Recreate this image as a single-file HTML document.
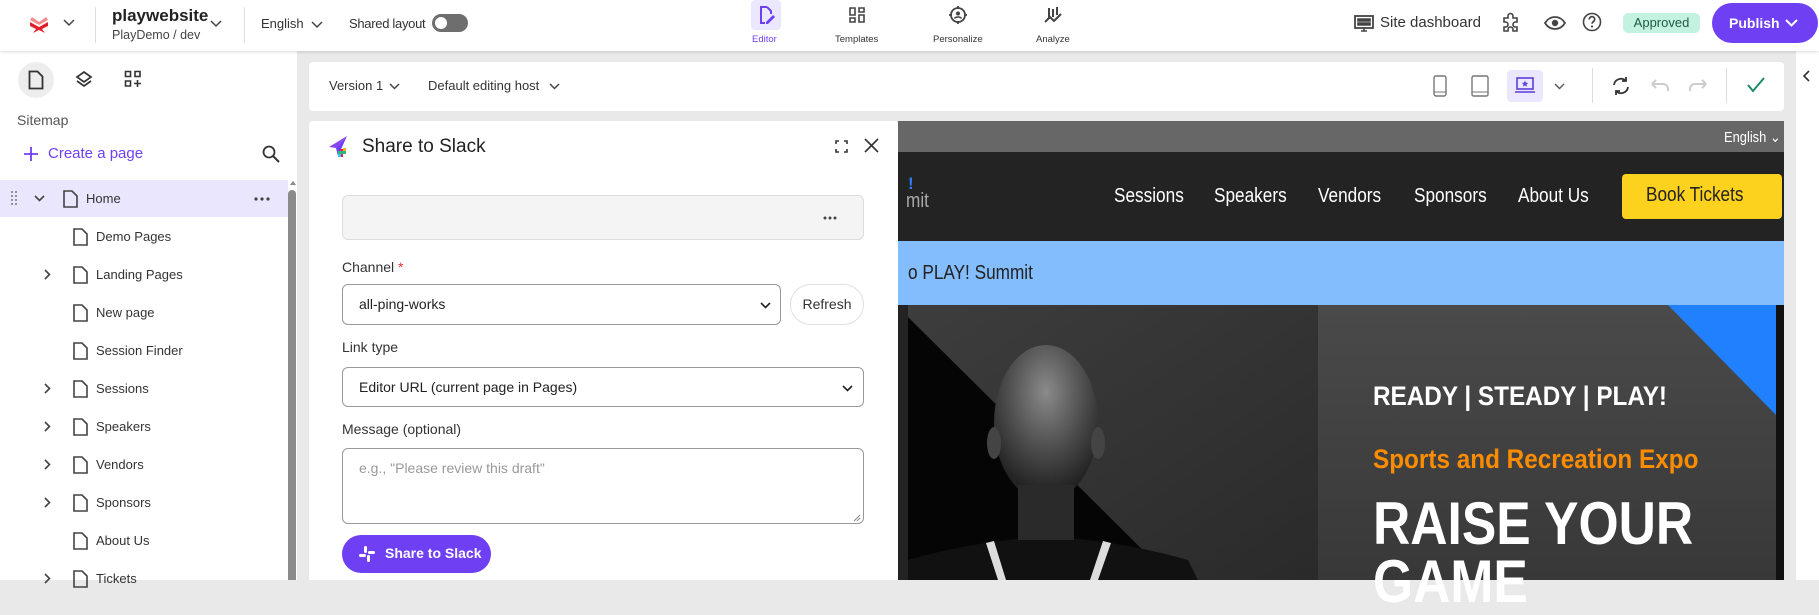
<!DOCTYPE html>
<html><head><meta charset="utf-8"><style>
*{box-sizing:border-box;margin:0;padding:0}
html{background:#e9e9e9}
body{width:1819px;height:580px;overflow:hidden;font-family:"Liberation Sans",sans-serif;background:#e9e9e9;position:relative;color:#222}
.a{position:absolute}
.top{left:0;top:0;width:1819px;height:51px;background:#fff;box-shadow:0 1px 3px rgba(0,0,0,.15);z-index:5}
.t{position:absolute;white-space:nowrap}
.left{left:0;top:51px;width:297px;height:529px;background:#fff}
.row{position:absolute;left:0;width:288px;height:38px;font-size:13px;color:#333}
.row span{position:absolute;top:11px}
.n{transform:scaleX(.86);transform-origin:0 0}
</style></head><body>

<div class="a top">
  <svg class="a" style="left:28px;top:13px" width="22" height="22" viewBox="0 0 22 22"><path d="M4 4 L11 9 L18 4 L20 7 L11 12 L2 7Z" fill="#f28b8b"/><path d="M2 9 L11 14 L20 9 L20 13 L14 16 L17 20 L11 17 L5 20 L8 16 L2 13Z" fill="#e2202a"/></svg>
  <svg class="a" style="left:63px;top:19px" width="12" height="8"><path d="M1 1l5 5 5-5" stroke="#444" stroke-width="1.5" fill="none"/></svg>
  <div class="a" style="left:95px;top:7px;width:1px;height:36px;background:#ddd"></div>
  <div class="t" style="left:112px;top:6px;font-size:17px;font-weight:bold;color:#222">playwebsite</div>
  <div class="t" style="left:112px;top:28px;font-size:12.5px;color:#444">PlayDemo / dev</div>
  <svg class="a" style="left:210px;top:20px" width="12" height="8"><path d="M1 1l5 5 5-5" stroke="#444" stroke-width="1.5" fill="none"/></svg>
  <div class="a" style="left:244px;top:7px;width:1px;height:36px;background:#ddd"></div>
  <div class="t" style="left:261px;top:16px;font-size:13px;color:#333">English</div>
  <svg class="a" style="left:311px;top:21px" width="12" height="8"><path d="M1 1l5 5 5-5" stroke="#444" stroke-width="1.5" fill="none"/></svg>
  <div class="t" style="left:349px;top:16px;font-size:13px;color:#333;letter-spacing:-.3px">Shared layout</div>
  <div class="a" style="left:432px;top:14px;width:36px;height:18px;border-radius:9px;background:#6e6e6e"></div>
  <div class="a" style="left:435px;top:17px;width:12px;height:12px;border-radius:6px;background:#fff"></div>

  <div class="a" style="left:751px;top:0;width:30px;height:30px;border-radius:4px;background:#ebe7fe"></div>
  <svg class="a" style="left:756px;top:5px" width="20" height="20" viewBox="0 0 20 20"><path d="M11 2H5v16h4M11 2l4 4v3" stroke="#6e3ff3" stroke-width="2" fill="none"/><path d="M10 17l7-7 2 2-7 7h-2z" fill="#6e3ff3"/></svg>
  <div class="t" style="left:752px;top:34px;font-size:9.5px;color:#6e3ff3">Editor</div>
  <svg class="a" style="left:848px;top:6px" width="18" height="18" viewBox="0 0 18 18"><path d="M2 2h5v7H2zM11 2h5v4h-5zM11 9h5v7h-5zM2 12h5v4H2z" stroke="#444" stroke-width="1.6" fill="none"/></svg>
  <div class="t" style="left:835px;top:34px;font-size:9.5px;color:#333">Templates</div>
  <svg class="a" style="left:948px;top:5px" width="20" height="20" viewBox="0 0 20 20"><circle cx="10" cy="10" r="7" stroke="#444" stroke-width="1.8" fill="none"/><path d="M10 1v3M10 16v3M1 10h3M16 10h3" stroke="#444" stroke-width="1.8"/><circle cx="10" cy="8.5" r="2" fill="#444"/><path d="M6.5 13.5c1-2 6-2 7 0" stroke="#444" stroke-width="1.6" fill="none"/></svg>
  <div class="t" style="left:933px;top:34px;font-size:9.5px;color:#333">Personalize</div>
  <svg class="a" style="left:1043px;top:5px" width="20" height="20" viewBox="0 0 20 20"><path d="M6 3v11M10 4v8M14 2v8M2 17l5-5 4 4 7-7" stroke="#444" stroke-width="2" fill="none"/></svg>
  <div class="t" style="left:1036px;top:34px;font-size:9.5px;color:#333">Analyze</div>

  <svg class="a" style="left:1354px;top:14px" width="20" height="20" viewBox="0 0 20 20"><rect x="1" y="2" width="18" height="12" stroke="#444" stroke-width="1.8" fill="none"/><path d="M4 5h6v2H4zM11 5h5v2h-5zM4 9h6v2H4zM11 9h5v2h-5zM7 17h6M10 14v3" stroke="#444" stroke-width="1.6" fill="#444"/></svg>
  <div class="t" style="left:1380px;top:14px;font-size:15px;color:#333">Site dashboard</div>
  <svg class="a" style="left:1500px;top:12px" width="22" height="22" viewBox="0 0 22 22"><path d="M8 4a2.5 2.5 0 015 0v2h4v4h-1.5a2.5 2.5 0 000 5H17v4h-4v-1.5a2.5 2.5 0 00-5 0V19H4v-4h1.5a2.5 2.5 0 000-5H4V6h4z" stroke="#444" stroke-width="1.6" fill="none"/></svg>
  <svg class="a" style="left:1544px;top:14px" width="22" height="18" viewBox="0 0 22 18"><path d="M1 9c5-8 15-8 20 0-5 8-15 8-20 0z" stroke="#444" stroke-width="1.8" fill="none"/><circle cx="11" cy="9" r="3.2" fill="#444"/></svg>
  <svg class="a" style="left:1582px;top:12px" width="20" height="20" viewBox="0 0 20 20"><circle cx="10" cy="10" r="8.5" stroke="#444" stroke-width="1.6" fill="none"/><path d="M7.3 7.5a2.7 2.7 0 115 1.2c-.8 1-2.3 1.4-2.3 3" stroke="#444" stroke-width="1.7" fill="none"/><circle cx="10" cy="14.5" r="1.1" fill="#444"/></svg>
  <div class="a" style="left:1623px;top:13px;width:77px;height:20px;border-radius:5px;background:#c3f2e0;font-size:13px;color:#1d5a44;text-align:center;line-height:20px">Approved</div>
  <div class="a" style="left:1712px;top:3px;width:106px;height:40px;border-radius:20px;background:#6e3ff3;color:#fff;font-weight:bold;font-size:14px;line-height:40px;padding-left:17px">Publish</div>
  <svg class="a" style="left:1785px;top:19px" width="13" height="8"><path d="M1 1l5.5 5.5L12 1" stroke="#fff" stroke-width="2" fill="none"/></svg>
</div>

<div class="a left">
  <div class="a" style="left:18px;top:11px;width:36px;height:36px;border-radius:18px;background:#ededed"></div>
  <svg class="a" style="left:28px;top:19px" width="16" height="20" viewBox="0 0 16 20"><path d="M1.5 1.5h8l5 5v12h-13z" stroke="#333" stroke-width="1.8" fill="none"/></svg>
  <svg class="a" style="left:74px;top:19px" width="20" height="20" viewBox="0 0 20 20"><path d="M10 2l7 5-7 5-7-5z" stroke="#333" stroke-width="1.7" fill="none"/><path d="M3 11l7 5 7-5" stroke="#333" stroke-width="1.7" fill="none"/></svg>
  <svg class="a" style="left:124px;top:19px" width="18" height="18" viewBox="0 0 18 18"><path d="M1.5 1.5h5v5h-5zM11 1.5h5v5h-5zM1.5 11h5v5h-5zM13.5 10v7M10 13.5h7" stroke="#333" stroke-width="1.6" fill="none"/></svg>
  <div class="t" style="left:17px;top:61px;font-size:14px;color:#555">Sitemap</div>
  <svg class="a" style="left:24px;top:96px" width="14" height="14"><path d="M7 0v14M0 7h14" stroke="#6e3ff3" stroke-width="1.8"/></svg>
  <div class="t" style="left:48px;top:94px;font-size:15px;color:#6e3ff3">Create a page</div>
  <svg class="a" style="left:262px;top:94px" width="18" height="18" viewBox="0 0 18 18"><circle cx="7" cy="7" r="5.5" stroke="#333" stroke-width="1.8" fill="none"/><path d="M11 11l6 6" stroke="#333" stroke-width="2"/></svg>

  <div class="row" style="top:129px;background:#e9e6fd;height:37px">
    <svg class="a" style="left:11px;top:11px" width="6" height="16"><g fill="#777"><circle cx="1" cy="1" r="1"/><circle cx="5" cy="1" r="1"/><circle cx="1" cy="5" r="1"/><circle cx="5" cy="5" r="1"/><circle cx="1" cy="9" r="1"/><circle cx="5" cy="9" r="1"/><circle cx="1" cy="13" r="1"/><circle cx="5" cy="13" r="1"/></g></svg>
    <svg class="a" style="left:34px;top:15px" width="11" height="7"><path d="M1 1l4.5 4.5L10 1" stroke="#444" stroke-width="1.6" fill="none"/></svg>
    <svg class="a" style="left:63px;top:10px" width="15" height="18" viewBox="0 0 15 18"><path d="M1 1h8l5 5v11H1z" stroke="#444" stroke-width="1.6" fill="none"/></svg>
    <span style="left:86px">Home</span>
    <svg class="a" style="left:254px;top:17px" width="16" height="4"><g fill="#444"><circle cx="2" cy="2" r="1.6"/><circle cx="8" cy="2" r="1.6"/><circle cx="14" cy="2" r="1.6"/></g></svg>
  </div>
</div>
<div class="a" style="left:288px;top:190px;width:8px;height:390px;background:#8b8b8b;border-radius:4px 4px 0 0"></div>
<div class="a" style="left:290px;top:181px;width:0;height:0;border-left:3px solid transparent;border-right:3px solid transparent;border-bottom:4px solid #888"></div>

<div class="a" style="left:0;top:218px;width:288px;height:362px">
  <div class="row" style="top:0"><svg class="a" style="left:73px;top:10px" width="15" height="18"><path d="M1 1h8l5 5v11H1z" stroke="#444" stroke-width="1.6" fill="none"/></svg><span style="left:96px">Demo Pages</span></div>
  <div class="row" style="top:38px"><svg class="a" style="left:44px;top:13px" width="7" height="11"><path d="M1 1l4.5 4.5L1 10" stroke="#444" stroke-width="1.6" fill="none"/></svg><svg class="a" style="left:73px;top:10px" width="15" height="18"><path d="M1 1h8l5 5v11H1z" stroke="#444" stroke-width="1.6" fill="none"/></svg><span style="left:96px">Landing Pages</span></div>
  <div class="row" style="top:76px"><svg class="a" style="left:73px;top:10px" width="15" height="18"><path d="M1 1h8l5 5v11H1z" stroke="#444" stroke-width="1.6" fill="none"/></svg><span style="left:96px">New page</span></div>
  <div class="row" style="top:114px"><svg class="a" style="left:73px;top:10px" width="15" height="18"><path d="M1 1h8l5 5v11H1z" stroke="#444" stroke-width="1.6" fill="none"/></svg><span style="left:96px">Session Finder</span></div>
  <div class="row" style="top:152px"><svg class="a" style="left:44px;top:13px" width="7" height="11"><path d="M1 1l4.5 4.5L1 10" stroke="#444" stroke-width="1.6" fill="none"/></svg><svg class="a" style="left:73px;top:10px" width="15" height="18"><path d="M1 1h8l5 5v11H1z" stroke="#444" stroke-width="1.6" fill="none"/></svg><span style="left:96px">Sessions</span></div>
  <div class="row" style="top:190px"><svg class="a" style="left:44px;top:13px" width="7" height="11"><path d="M1 1l4.5 4.5L1 10" stroke="#444" stroke-width="1.6" fill="none"/></svg><svg class="a" style="left:73px;top:10px" width="15" height="18"><path d="M1 1h8l5 5v11H1z" stroke="#444" stroke-width="1.6" fill="none"/></svg><span style="left:96px">Speakers</span></div>
  <div class="row" style="top:228px"><svg class="a" style="left:44px;top:13px" width="7" height="11"><path d="M1 1l4.5 4.5L1 10" stroke="#444" stroke-width="1.6" fill="none"/></svg><svg class="a" style="left:73px;top:10px" width="15" height="18"><path d="M1 1h8l5 5v11H1z" stroke="#444" stroke-width="1.6" fill="none"/></svg><span style="left:96px">Vendors</span></div>
  <div class="row" style="top:266px"><svg class="a" style="left:44px;top:13px" width="7" height="11"><path d="M1 1l4.5 4.5L1 10" stroke="#444" stroke-width="1.6" fill="none"/></svg><svg class="a" style="left:73px;top:10px" width="15" height="18"><path d="M1 1h8l5 5v11H1z" stroke="#444" stroke-width="1.6" fill="none"/></svg><span style="left:96px">Sponsors</span></div>
  <div class="row" style="top:304px"><svg class="a" style="left:73px;top:10px" width="15" height="18"><path d="M1 1h8l5 5v11H1z" stroke="#444" stroke-width="1.6" fill="none"/></svg><span style="left:96px">About Us</span></div>
  <div class="row" style="top:342px"><svg class="a" style="left:44px;top:13px" width="7" height="11"><path d="M1 1l4.5 4.5L1 10" stroke="#444" stroke-width="1.6" fill="none"/></svg><svg class="a" style="left:73px;top:10px" width="15" height="18"><path d="M1 1h8l5 5v11H1z" stroke="#444" stroke-width="1.6" fill="none"/></svg><span style="left:96px">Tickets</span></div>
</div>

<div class="a" style="left:1796px;top:51px;width:23px;height:529px;background:#fff"></div>
<svg class="a" style="left:1802px;top:70px" width="8" height="12"><path d="M7 1L2 6l5 5" stroke="#333" stroke-width="1.6" fill="none"/></svg>

<div class="a" style="left:309px;top:62px;width:1475px;height:49px;background:#fff;border-radius:4px">
  <div class="t" style="left:20px;top:16px;font-size:13px;color:#333">Version 1</div>
  <svg class="a" style="left:80px;top:21px" width="11" height="7"><path d="M1 1l4.5 4.5L10 1" stroke="#444" stroke-width="1.5" fill="none"/></svg>
  <div class="t" style="left:119px;top:16px;font-size:13px;color:#333">Default editing host</div>
  <svg class="a" style="left:240px;top:21px" width="11" height="7"><path d="M1 1l4.5 4.5L10 1" stroke="#444" stroke-width="1.5" fill="none"/></svg>
  <svg class="a" style="left:1124px;top:13px" width="14" height="22"><rect x="1" y="1" width="12" height="20" rx="2" stroke="#777" stroke-width="1.4" fill="none"/><path d="M1 17h12" stroke="#777"/></svg>
  <svg class="a" style="left:1162px;top:13px" width="18" height="22"><rect x="1" y="1" width="16" height="20" rx="1.5" stroke="#777" stroke-width="1.4" fill="none"/><path d="M1 17h16" stroke="#777"/></svg>
  <div class="a" style="left:1198px;top:8px;width:36px;height:32px;border-radius:4px;background:#ebe7fe"></div>
  <svg class="a" style="left:1205px;top:15px" width="22" height="17" viewBox="0 0 22 17"><rect x="3" y="1" width="16" height="11" stroke="#5b3fd6" stroke-width="1.6" fill="none"/><path d="M1 15h20" stroke="#5b3fd6" stroke-width="1.6"/><path d="M11 3.5l1 2.2 2.3.2-1.8 1.5.6 2.3-2.1-1.3-2.1 1.3.6-2.3-1.8-1.5 2.3-.2z" fill="#5b3fd6"/></svg>
  <svg class="a" style="left:1245px;top:21px" width="11" height="7"><path d="M1 1l4.5 4.5L10 1" stroke="#555" stroke-width="1.4" fill="none"/></svg>
  <div class="a" style="left:1283px;top:6px;width:1px;height:35px;background:#ddd"></div>
  <svg class="a" style="left:1302px;top:14px" width="20" height="20" viewBox="0 0 20 20"><path d="M3 9a7 7 0 0112-4M17 11a7 7 0 01-12 4" stroke="#333" stroke-width="1.8" fill="none"/><path d="M15 1v4h-4M5 19v-4h4" stroke="#333" stroke-width="1.8" fill="none"/></svg>
  <svg class="a" style="left:1341px;top:16px" width="20" height="14" viewBox="0 0 20 14"><path d="M2 6h11a5 5 0 015 5v2M2 6l4-4M2 6l4 4" stroke="#ccc" stroke-width="2" fill="none"/></svg>
  <svg class="a" style="left:1379px;top:16px" width="20" height="14" viewBox="0 0 20 14"><path d="M18 6H7a5 5 0 00-5 5v2M18 6l-4-4M18 6l-4 4" stroke="#ccc" stroke-width="2" fill="none"/></svg>
  <div class="a" style="left:1417px;top:6px;width:1px;height:35px;background:#ddd"></div>
  <svg class="a" style="left:1438px;top:15px" width="18" height="16"><path d="M1 8l5 6L17 1" stroke="#1a8a6a" stroke-width="2" fill="none"/></svg>
</div>

<div class="a" style="left:898px;top:121px;width:886px;height:459px;background:#232323">
  <div class="a" style="left:0;top:0;width:886px;height:31px;background:#676767"></div>
  <div class="t n" style="left:826px;top:7px;font-size:15px;color:#fff">English ⌄</div>
  <div class="t" style="left:10px;top:53px;font-size:17px;color:#2d7cf6;font-weight:bold">!</div>
  <div class="t n" style="left:8px;top:69px;font-size:20px;color:#aaa">mit</div>
  <div class="t n" style="left:216px;top:64px;font-size:20px;color:#fff">Sessions</div>
  <div class="t n" style="left:316px;top:64px;font-size:20px;color:#fff">Speakers</div>
  <div class="t n" style="left:420px;top:64px;font-size:20px;color:#fff">Vendors</div>
  <div class="t n" style="left:516px;top:64px;font-size:20px;color:#fff">Sponsors</div>
  <div class="t n" style="left:620px;top:64px;font-size:20px;color:#fff">About Us</div>
  <div class="a" style="left:724px;top:53px;width:160px;height:45px;background:#fdd21f;border-radius:4px"></div>
  <div class="t n" style="left:748px;top:63px;font-size:20px;color:#222">Book Tickets</div>
  <div class="a" style="left:0;top:120px;width:886px;height:64px;background:#83bdfd"></div>
  <div class="t n" style="left:10px;top:141px;font-size:20px;color:#222">o PLAY! Summit</div>
  <svg class="a" style="left:0;top:184px" width="886" height="275" viewBox="0 0 886 275">
    <defs><linearGradient id="g1" x1="0" y1="0" x2="1" y2="1"><stop offset="0" stop-color="#3d3d3d"/><stop offset="1" stop-color="#2a2a2a"/></linearGradient>
    <linearGradient id="g2" x1="0" y1="0" x2="0" y2="1"><stop offset="0" stop-color="#4a4a4a"/><stop offset="1" stop-color="#383838"/></linearGradient>
    <radialGradient id="hd" cx=".5" cy=".3" r=".65"><stop offset="0" stop-color="#8a8a8a"/><stop offset=".6" stop-color="#4a4a4a"/><stop offset="1" stop-color="#222"/></radialGradient></defs>
    <rect x="10" y="0" width="410" height="275" fill="url(#g1)"/>
    <path d="M10 12 L275 275 L10 275Z" fill="#050505"/>
    <path d="M10 275 L10 255 Q80 235 150 232 Q220 235 290 255 L300 275Z" fill="#111"/>
    <path d="M88 238 L100 275 L108 275 L96 236Z M205 236 L192 275 L200 275 L213 238Z" fill="#ddd"/>
    <ellipse cx="148" cy="118" rx="52" ry="78" fill="url(#hd)"/>
    <rect x="120" y="180" width="56" height="55" fill="#2a2a2a"/>
    <ellipse cx="96" cy="138" rx="7" ry="16" fill="#444"/>
    <ellipse cx="200" cy="138" rx="7" ry="16" fill="#444"/>
    <rect x="420" y="0" width="466" height="275" fill="url(#g2)"/>
    <path d="M770 0 L878 0 L878 110Z" fill="#2080fd"/>
    <rect x="878" y="0" width="8" height="275" fill="#111"/>
  </svg>
  <div class="t n" style="left:475px;top:260px;font-size:27px;font-weight:bold;color:#fff;transform:scaleX(.9)">READY | STEADY | PLAY!</div>
  <div class="t n" style="left:475px;top:323px;font-size:27px;font-weight:bold;color:#fb8c00;transform:scaleX(.9)">Sports and Recreation Expo</div>
  <div class="t n" style="left:475px;top:374px;font-size:60px;font-weight:bold;color:#fff;line-height:58px;transform:scaleX(.86)">RAISE YOUR<br>GAME</div>
</div>

<div class="a" style="left:309px;top:121px;width:589px;height:459px;background:#fff;border-radius:4px 4px 0 0">
  <svg class="a" style="left:18px;top:14px" width="24" height="24" viewBox="0 0 24 24"><path d="M20 1L2 12l7 1z" fill="#8e44f0"/><path d="M20 1L9 13l2 8z" fill="#6e3ff3"/><rect x="13" y="14" width="3" height="8" fill="#e01e5a"/><rect x="11" y="16" width="8" height="3" fill="#2eb67d"/><rect x="16" y="13" width="3" height="3" fill="#ecb22e"/><rect x="11" y="19" width="3" height="3" fill="#36c5f0"/></svg>
  <div class="t" style="left:53px;top:15px;font-size:19px;color:#222">Share to Slack</div>
  <svg class="a" style="left:526px;top:19px" width="13" height="13"><path d="M1 4V1h3M9 1h3v3M12 9v3H9M4 12H1V9" stroke="#333" stroke-width="1.6" fill="none"/></svg>
  <svg class="a" style="left:555px;top:17px" width="15" height="15"><path d="M1 1l13 13M14 1L1 14" stroke="#333" stroke-width="1.6"/></svg>
  <div class="a" style="left:33px;top:74px;width:522px;height:45px;background:#f4f4f4;border:1px solid #ddd;border-radius:6px"></div>
  <svg class="a" style="left:514px;top:95px" width="14" height="4"><g fill="#444"><circle cx="2" cy="2" r="1.5"/><circle cx="7" cy="2" r="1.5"/><circle cx="12" cy="2" r="1.5"/></g></svg>
  <div class="t" style="left:33px;top:138px;font-size:14px;color:#333">Channel <span style="color:#d33">*</span></div>
  <div class="a" style="left:33px;top:163px;width:439px;height:41px;border:1px solid #999;border-radius:6px"></div>
  <div class="t" style="left:50px;top:175px;font-size:14px;color:#222">all-ping-works</div>
  <svg class="a" style="left:451px;top:181px" width="11" height="7"><path d="M1 1l4.5 4.5L10 1" stroke="#222" stroke-width="1.6" fill="none"/></svg>
  <div class="a" style="left:481px;top:163px;width:74px;height:41px;border:1px solid #e0e0e0;border-radius:21px;font-size:14px;color:#333;text-align:center;line-height:39px">Refresh</div>
  <div class="t" style="left:33px;top:218px;font-size:14px;color:#333">Link type</div>
  <div class="a" style="left:33px;top:246px;width:522px;height:40px;border:1px solid #999;border-radius:6px"></div>
  <div class="t" style="left:50px;top:258px;font-size:14px;color:#222">Editor URL (current page in Pages)</div>
  <svg class="a" style="left:533px;top:264px" width="11" height="7"><path d="M1 1l4.5 4.5L10 1" stroke="#222" stroke-width="1.6" fill="none"/></svg>
  <div class="t" style="left:33px;top:300px;font-size:14px;color:#333">Message (optional)</div>
  <div class="a" style="left:33px;top:327px;width:522px;height:76px;border:1px solid #999;border-radius:6px"></div>
  <div class="t" style="left:50px;top:339px;font-size:14px;color:#999">e.g., "Please review this draft"</div>
  <svg class="a" style="left:544px;top:393px" width="8" height="8"><path d="M7 1L1 7M7 4L4 7" stroke="#888"/></svg>
  <div class="a" style="left:33px;top:414px;width:149px;height:38px;border-radius:19px;background:#6e3ff3"></div>
  <svg class="a" style="left:50px;top:425px" width="16" height="16" viewBox="0 0 16 16" fill="#fff"><rect x="5" y="0" width="3" height="7" rx="1.5"/><rect x="8" y="9" width="3" height="7" rx="1.5"/><rect x="0" y="8" width="7" height="3" rx="1.5"/><rect x="9" y="5" width="7" height="3" rx="1.5"/></svg>
  <div class="t" style="left:76px;top:424px;font-size:14px;font-weight:bold;color:#fff">Share to Slack</div>
</div>

</body></html>
